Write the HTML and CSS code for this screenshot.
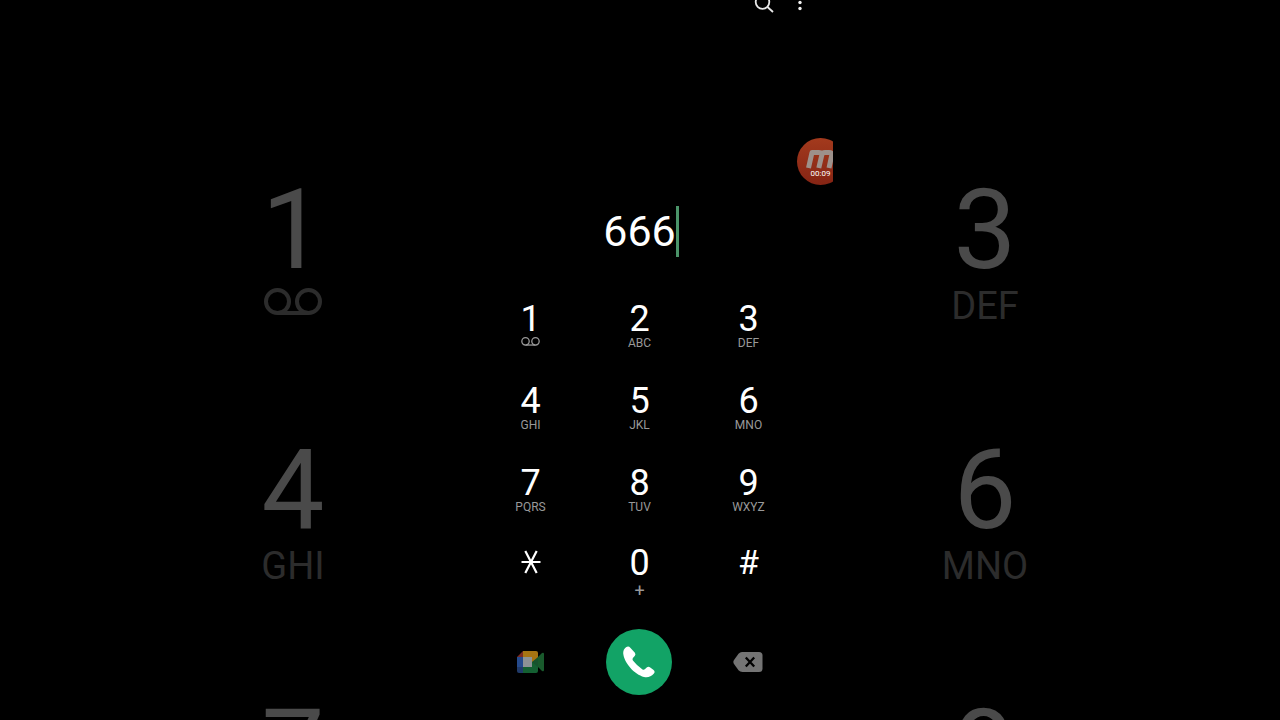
FILE: index.html
```html
<!DOCTYPE html>
<html lang="en">
<head>
<meta charset="utf-8">
<meta name="viewport" content="width=device-width, initial-scale=1">
<title>Phone</title>
<link rel="stylesheet" href="styles.css">
</head>
<body>
<svg class="defs" aria-hidden="true">
  <symbol id="voicemail" viewBox="0 0 58 28">
    <g fill="none" stroke="currentColor" stroke-width="4"><circle cx="13.500" cy="13.500" r="11.500"/><circle cx="44.500" cy="13.500" r="11.500"/><path d="M13.500 25h31"/></g>
  </symbol>
</svg>
<div class="backdrop" aria-hidden="true">
  <div class="ghost"><span class="ghost-digit">1</span><span class="ghost-sub"><svg class="ghost-vm"><use href="#voicemail"/></svg></span></div>
  <div class="ghost"><span class="ghost-digit">3</span><span class="ghost-sub">DEF</span></div>
  <div class="ghost"><span class="ghost-digit">4</span><span class="ghost-sub">GHI</span></div>
  <div class="ghost"><span class="ghost-digit">6</span><span class="ghost-sub">MNO</span></div>
  <div class="ghost"><span class="ghost-digit">7</span></div>
  <div class="ghost"><span class="ghost-digit">9</span></div>
</div>
<main class="phone">
  <header class="toolbar">
    <button class="tool" aria-label="Search"><svg width="24" height="24" viewBox="0 0 24 24" fill="none" stroke="#e8e8e8" stroke-width="1.800"><circle cx="10.500" cy="10" r="6.800"/><path d="M15.500 15l5.500 5"/></svg></button>
    <button class="tool" aria-label="More options"><svg width="24" height="24" viewBox="0 0 24 24" fill="#f0f0f0"><circle cx="12" cy="4.500" r="1.700"/><circle cx="12" cy="10.500" r="1.700"/><circle cx="12" cy="16.500" r="1.700"/></svg></button>
  </header>
  <div class="recorder">
    <svg width="32" height="20" viewBox="0 0 32 20" fill="none" stroke="#9d918b" stroke-width="5" stroke-linejoin="round"><path d="M3.500 19L7 3.500h7q3.500 0 2.700 3L13.800 19M16.600 6Q17.500 3.500 20 3.500h4q3.500 0 2.700 3L24 19"/></svg>
    <span class="time">00:09</span>
  </div>
  <div class="entry"><input class="number" type="tel" value="666" aria-label="Phone number"><span class="caret"></span></div>
  <div class="keypad">
    <button class="key"><span class="digit">1</span><span class="sub"><svg class="vm" aria-label="Voicemail"><use href="#voicemail"/></svg></span></button>
    <button class="key"><span class="digit">2</span><span class="sub">ABC</span></button>
    <button class="key"><span class="digit">3</span><span class="sub">DEF</span></button>
    <button class="key"><span class="digit">4</span><span class="sub">GHI</span></button>
    <button class="key"><span class="digit">5</span><span class="sub">JKL</span></button>
    <button class="key"><span class="digit">6</span><span class="sub">MNO</span></button>
    <button class="key"><span class="digit">7</span><span class="sub">PQRS</span></button>
    <button class="key"><span class="digit">8</span><span class="sub">TUV</span></button>
    <button class="key"><span class="digit">9</span><span class="sub">WXYZ</span></button>
  </div>
  <div class="keypad last">
    <button class="key" aria-label="Star"><svg class="star" width="20" height="24" viewBox="0 0 20 24" fill="none" stroke="#fff" stroke-width="2.200"><path d="M0.500 12h19M4.300 1l11.400 22M15.700 1L4.300 23"/></svg></button>
    <button class="key"><span class="digit">0</span><span class="sub plus">+</span></button>
    <button class="key" aria-label="Pound"><span class="digit hash">#</span></button>
  </div>
  <div class="actions">
    <button class="action" aria-label="Video call"><svg width="28" height="24" viewBox="0 0 28 24">
      <path d="M7 1v6H1z" fill="#7c2a20"/><path d="M1 7h6v10H1z" fill="#254a8c"/><path d="M1 17h6v6H3q-2 0-2-2z" fill="#203a69"/>
      <path d="M7 1h13q2 0 2 2v6l-6 4V7H7z" fill="#a77412"/><path d="M7 17h9v-5l6-1v10q0 2-2 2H7z" fill="#146032"/><path d="M7 7h9v10H7z" fill="#8d9295"/><path d="M16 12l6-5v10z" fill="#17522d"/><path d="M22 7l4-4q2-1 2 1v16q0 2-2 1l-4-4z" fill="#195a2c"/></svg></button>
    <button class="action call" aria-label="Call"><svg width="66" height="66" viewBox="0 0 66 66"><path fill="#fff" d="M20 18.300q2.500-1.800 4.300.5l4.600 5q1.200 1.700-.2 3.200l-1.800 2q-.8 1.200 0 2.500 4.300 5.500 9.600 8.900 1.300.8 2.300-.1l1.900-1.700q1.500-1.400 3.200-.3l3.400 2.500q2.400 2 .4 4-3.700 4.300-9.700 3.200C28.500 45.500 18 34 17.200 24.300q-.1-4 2.800-6z"/></svg></button>
    <button class="action" aria-label="Delete"><svg width="30" height="20" viewBox="0 0 30 20"><path d="M9 0h17q3.500 0 3.500 3.500v13q0 3.500-3.500 3.500H9.500q-2.500 0-4-1.800L1 12q-1.300-2 0-4l4.500-6.200Q7 0 9 0z" fill="#747474"/><path d="M12.800 5.500l8.400 9M21.200 5.500l-8.400 9" stroke="#000" stroke-width="2.300"/></svg></button>
  </div>
</main>
</body>
</html>
```
FILE: styles.css
```css
* {
  box-sizing: border-box;
}

body {
  margin: 0;
  min-height: 100vh;
  overflow: hidden;
  background: #000;
  color: #fff;
  font-family: Roboto, sans-serif;
}

button {
  padding: 0;
  border: 0;
  background: none;
  color: inherit;
  font: inherit;
}

svg {
  display: block;
}

.defs {
  position: absolute;
  width: 0;
  height: 0;
}

.backdrop {
  position: absolute;
  inset: 0;
  display: grid;
  grid-template-columns: 200px 200px;
  grid-auto-rows: 152px;
  align-content: start;
  justify-content: center;
  gap: 108px 492px;
  padding: 174px 2px 0 0;
  overflow: hidden;
  color: #4a4a4a;
}

.ghost {
  display: flex;
  flex-direction: column;
  align-items: center;
}

.ghost-digit {
  font-size: 112px;
  line-height: 112px;
}

.ghost-sub {
  color: #2c2c2c;
  font-size: 38px;
  line-height: 40px;
}

.ghost-vm {
  width: 58px;
  height: 28px;
  margin-top: 2px;
}

.phone {
  position: relative;
  display: flex;
  flex-direction: column;
  width: 386px;
  max-width: 100%;
  min-height: 100vh;
  margin: 0 auto;
  overflow: hidden;
  background: #000;
}

.toolbar {
  display: flex;
  justify-content: flex-end;
  gap: 12px;
  margin-top: -8px;
  padding-right: 21px;
}

.recorder {
  position: absolute;
  top: 138px;
  right: -11px;
  display: flex;
  flex-direction: column;
  align-items: center;
  width: 47px;
  height: 47px;
  padding-top: 11px;
  border-radius: 50%;
  background: linear-gradient(#a33a1d, #852414);
}

.time {
  font-size: 8px;
  line-height: 10px;
}

.entry {
  display: flex;
  align-items: center;
  justify-content: center;
  height: 51px;
  margin-top: 190px;
  padding-left: 2px;
}

.number {
  width: 3ch;
  height: 51px;
  padding: 0;
  border: 0;
  outline: 0;
  background: none;
  color: #fff;
  font: 43px/51px Roboto, sans-serif;
}

.caret {
  width: 3px;
  height: 51px;
  background: #4b9469;
}

.keypad {
  display: grid;
  grid-template-columns: repeat(3, 109px);
  justify-content: center;
  row-gap: 34px;
  margin-top: 45px;
  padding-right: 1px;
}

.last {
  margin-top: 32px;
}

.key {
  display: flex;
  flex-direction: column;
  align-items: center;
  height: 48px;
}

.digit {
  font-size: 36px;
  line-height: 34px;
}

.sub {
  color: #999;
  font-size: 12px;
  line-height: 14px;
}

.vm {
  width: 19px;
  height: 9px;
  margin-top: 1px;
}

.star {
  margin-top: 4px;
}

.plus {
  font-size: 18px;
  line-height: 22px;
}

.hash {
  font-size: 34px;
  line-height: 32px;
}

.actions {
  display: grid;
  grid-template-columns: repeat(3, 109px);
  align-items: center;
  justify-content: center;
  justify-items: center;
  margin-top: 35px;
  padding-right: 2px;
}

.call {
  border-radius: 50%;
  background: #12a366;
}
```
